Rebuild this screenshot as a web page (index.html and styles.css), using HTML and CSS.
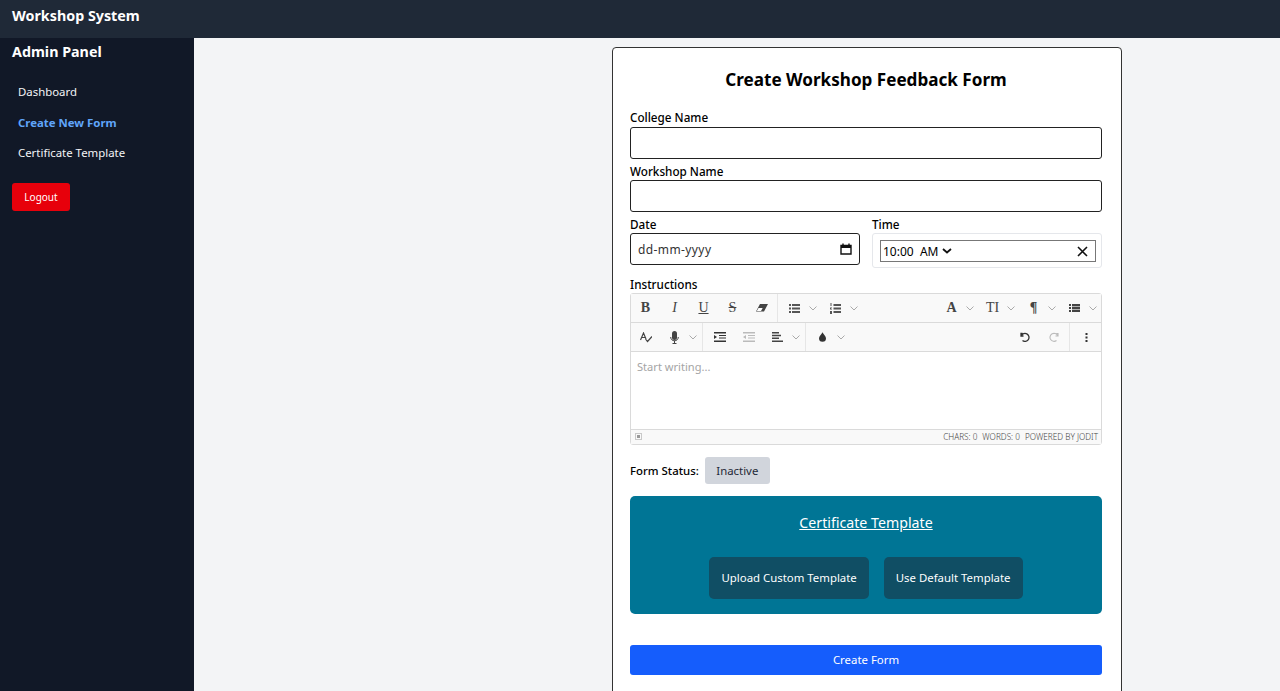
FILE: index.html
```html
<!DOCTYPE html>
<html lang="en">
<head>
  <meta charset="UTF-8">
  <title>Create Workshop Feedback Form</title>
  <link rel="stylesheet" href="styles.css">
</head>
<body>
  <header class="topbar">Workshop System</header>
  <div class="layout">
    <aside class="sidebar">
      <h2>Admin Panel</h2>
      <nav class="side-nav">
        <a href="#">Dashboard</a>
        <a href="#" class="active">Create New Form</a>
        <a href="#">Certificate Template</a>
      </nav>
      <button class="logout" type="button">Logout</button>
    </aside>
    <main class="main">
      <form class="card" autocomplete="off">
        <h1>Create Workshop Feedback Form</h1>

        <label class="label">College Name</label>
        <input class="input" type="text">
        <label class="label">Workshop Name</label>
        <input class="input" type="text">

        <div class="date-row">
          <div class="date-col">
            <label class="label">Date</label>
            <div class="input date-box">
              <span>dd-mm-yyyy</span>
              <svg width="12" height="12" viewBox="0 0 12 12"><path d="M1 2.5h10v8.500H1z" fill="none" stroke="#111" stroke-width="1.400"/><path d="M1 2h10v3H1z" fill="#111"/><path d="M3 .5v2M9 .5v2" stroke="#111" stroke-width="1.400"/></svg>
            </div>
          </div>
          <div class="date-col">
            <label class="label">Time</label>
            <div class="time-wrap">
              <div class="time-box">
                <span class="time-val">10:00&nbsp; AM</span>
                <svg class="time-chev" width="10" height="6" viewBox="0 0 10 6"><path d="M1 1l4 3.500L9 1" fill="none" stroke="#111" stroke-width="1.800"/></svg>
                <svg class="time-x" width="11" height="11" viewBox="0 0 11 11"><path d="M1 1l9 9M10 1l-9 9" stroke="#111" stroke-width="1.600"/></svg>
              </div>
            </div>
          </div>
        </div>

        <label class="label instr-label">Instructions</label>
        <div class="editor">
          <div class="tb-row">
            <span class="tb-btn glyph"><b>B</b></span>
            <span class="tb-btn glyph"><i>I</i></span>
            <span class="tb-btn glyph"><u>U</u></span>
            <span class="tb-btn glyph"><s>S</s></span>
            <span class="tb-btn"><svg width="12" height="8" viewBox="0 0 12 8"><path d="M4 0h8L8 7.500H0z" fill="#444"/><path d="M.8 7l1.700-3h4.200L5 7z" fill="#fff"/></svg></span>
            <span class="tb-sep"></span>
            <span class="tb-btn"><svg width="11" height="9" viewBox="0 0 11 9"><path d="M0 0h2v2H0zM0 3.500h2v2H0zM0 7h2v2H0zM3 0h8v2H3zM3 3.500h8v2H3zM3 7h8v2H3z" fill="#555"/></svg></span>
            <span class="tb-arrow"><svg class="chev" viewBox="0 0 8 5"><path d="M.5.500L4 4 7.500.5"/></svg></span>
            <span class="tb-btn"><svg width="11" height="11" viewBox="0 0 11 11"><path d="M.5 0h1v3h-1zM0 4.500h2v.6L.8 6H2v.6H0zM0 8h2v3H0zM3.500 1h7.500v2H3.500zM3.500 4.500h7.500v2H3.500zM3.500 8h7.500v2H3.500z" fill="#555"/></svg></span>
            <span class="tb-arrow"><svg class="chev" viewBox="0 0 8 5"><path d="M.5.500L4 4 7.500.5"/></svg></span>
            <span class="tb-fill"></span>
            <span class="tb-btn glyph tb-a"><b>A</b></span>
            <span class="tb-arrow"><svg class="chev" viewBox="0 0 8 5"><path d="M.5.500L4 4 7.500.5"/></svg></span>
            <span class="tb-btn glyph tb-t">TI</span>
            <span class="tb-arrow"><svg class="chev" viewBox="0 0 8 5"><path d="M.5.500L4 4 7.500.5"/></svg></span>
            <span class="tb-btn glyph tb-p">¶</span>
            <span class="tb-arrow"><svg class="chev" viewBox="0 0 8 5"><path d="M.5.500L4 4 7.500.5"/></svg></span>
            <span class="tb-btn"><svg width="11" height="8" viewBox="0 0 11 8"><path d="M0 0h2v2H0zM0 3h2v2H0zM0 6h2v2H0zM3 0h8v8H3z" fill="#444"/><path d="M3 2.500h8M3 5.500h8" stroke="#fff" stroke-width=".6"/></svg></span>
            <span class="tb-arrow"><svg class="chev" viewBox="0 0 8 5"><path d="M.5.500L4 4 7.500.5"/></svg></span>
          </div>
          <div class="tb-row">
            <span class="tb-btn"><svg width="12" height="11" viewBox="0 0 12 11"><path d="M.5 8L3.500 1 6 7M1.500 5.500h3.500M5.500 7l2 2.500L12 4.500" fill="none" stroke="#444" stroke-width="1.200"/></svg></span>
            <span class="tb-btn"><svg width="9" height="13" viewBox="0 0 9 13"><rect x="2" y="0" width="5" height="9" rx="2.500" fill="#444"/><path d="M.7 6c0 5 7.600 5 7.600 0M4.500 9.500V13M2.500 12.500h4" fill="none" stroke="#444"/></svg></span>
            <span class="tb-arrow"><svg class="chev" viewBox="0 0 8 5"><path d="M.5.500L4 4 7.500.5"/></svg></span>
            <span class="tb-sep"></span>
            <span class="tb-btn"><svg width="12" height="10" viewBox="0 0 12 10"><path d="M0 0h12v1.500H0zM5 3h7v1H5zM5 5.500h7v1H5zM0 8.500h12V10H0zM0 3l3 2-3 2z" fill="#333"/></svg></span>
            <span class="tb-btn"><svg width="12" height="10" viewBox="0 0 12 10"><path d="M0 0h12v1.500H0zM5 3h7v1H5zM5 5.500h7v1H5zM0 8.500h12V10H0zM3 3L0 5l3 2z" fill="#bbb"/></svg></span>
            <span class="tb-btn"><svg width="11" height="10" viewBox="0 0 11 10"><path d="M0 0h7v1.500H0zM0 2.800h9v1.500H0zM0 5.600h7v1.500H0zM0 8.400h11V10H0z" fill="#444"/></svg></span>
            <span class="tb-arrow"><svg class="chev" viewBox="0 0 8 5"><path d="M.5.500L4 4 7.500.5"/></svg></span>
            <span class="tb-sep"></span>
            <span class="tb-btn"><svg width="7" height="10" viewBox="0 0 8 11"><path d="M4 0c1 2.500 4 4.500 4 7a4 4 0 0 1-8 0c0-2.500 3-4.500 4-7z" fill="#333"/></svg></span>
            <span class="tb-arrow"><svg class="chev" viewBox="0 0 8 5"><path d="M.5.500L4 4 7.500.5"/></svg></span>
            <span class="tb-fill"></span>
            <span class="tb-btn"><svg width="10" height="10" viewBox="0 0 10 10"><path d="M2.500 1.500H1V4h2.500M1.300 3.800A4 4 0 1 1 2.500 8.500" fill="none" stroke="#333" stroke-width="1.300"/></svg></span>
            <span class="tb-btn"><svg width="10" height="10" viewBox="0 0 10 10"><path d="M7.500 1.500H9V4H6.500M8.700 3.800A4 4 0 1 0 7.500 8.500" fill="none" stroke="#bbb" stroke-width="1.100"/></svg></span>
            <span class="tb-sep"></span>
            <span class="tb-btn"><svg width="3" height="9" viewBox="0 0 3 9"><path d="M.5 0h2v2h-2zM.5 3.500h2v2h-2zM.5 7h2v2h-2z" fill="#333"/></svg></span>
          </div>
          <div class="editor-body">Start writing...</div>
          <div class="editor-foot">
            <svg width="7" height="7" viewBox="0 0 7 7"><rect x=".5" y=".5" width="6" height="6" fill="none" stroke="#999" stroke-dasharray="1 1"/><rect x="2" y="2" width="3" height="3" fill="#999"/></svg>
            <span class="foot-info">
              <span>CHARS: 0</span>
              <span>WORDS: 0</span>
              <span>POWERED BY JODIT</span>
            </span>
          </div>
        </div>

        <div class="status-row">
          <span class="status-label">Form Status:</span>
          <button class="status-btn" type="button">Inactive</button>
        </div>

        <section class="cert">
          <a href="#" class="cert-title">Certificate Template</a>
          <div class="cert-actions">
            <button type="button">Upload Custom Template</button>
            <button type="button">Use Default Template</button>
          </div>
        </section>

        <button class="submit" type="submit">Create Form</button>
      </form>
    </main>
  </div>
</body>
</html>
```

FILE: styles.css
```css
* {
  box-sizing: border-box;
}
html, body {
  height: 100%;
}
body {
  margin: 0;
  overflow: hidden;
  display: flex;
  flex-direction: column;
  background: #f3f4f6;
  color: #000;
  font-family: 'Noto Sans', 'Open Sans', sans-serif;
  font-size: 11.4px;
}
.topbar {
  flex: none;
  height: 38px;
  padding: 6px 12px 0;
  background: #1f2937;
  color: #fff;
  font-size: 14.3px;
  font-weight: 700;
}
.layout {
  flex: 1;
  display: flex;
  min-height: 0;
}
.sidebar {
  flex: none;
  width: 194px;
  padding: 4px 12px;
  background: #111827;
  color: #fff;
}
.sidebar h2 {
  margin: 0 0 16px;
  font-size: 14.3px;
  line-height: 20px;
}
.side-nav a {
  display: block;
  height: 30.5px;
  padding: 6px 6px 0;
  color: #f3f4f6;
  text-decoration: none;
}
.side-nav a.active {
  color: #60a5fa;
  font-weight: 700;
}
.logout {
  display: block;
  width: 58px;
  height: 28px;
  margin-top: 13px;
  padding: 0;
  border: none;
  border-radius: 3px;
  background: #e7000b;
  color: #fff;
  font: inherit;
  font-size: 10px;
}
.main {
  flex: 1;
  min-width: 0;
  display: flex;
  justify-content: center;
  padding: 9px 0 0 260px;
  overflow: hidden;
}
.card {
  flex: none;
  width: 510px;
  height: 700px;
  padding: 18px 19px 18px 17px;
  background: #fff;
  border: 1px solid #333;
  border-radius: 4px;
}
.card h1 {
  margin: 1px 0 16px;
  font-size: 17.1px;
  line-height: 26px;
  font-weight: 700;
  text-align: center;
}
.label {
  display: block;
  height: 18px;
  font-size: 11.7px;
  font-weight: 500;
  line-height: 19px;
}
.card h1 + .label {
  line-height: 17px;
}
.input {
  display: block;
  width: 100%;
  height: 32px;
  margin-bottom: 3px;
  padding: 0 7px;
  background: #fff;
  border: 1px solid #222;
  border-radius: 3px;
  font: inherit;
}
.date-row {
  display: flex;
  gap: 12px;
}
.date-col {
  flex: 1;
}
.date-box {
  display: flex;
  align-items: center;
  justify-content: space-between;
  margin-bottom: 0;
  color: #333;
  font-size: 12px;
  letter-spacing: .4px;
}
.time-wrap {
  height: 35px;
  padding: 6px 5px 0 7px;
  border: 1px solid #e5e7eb;
  border-radius: 3px;
}
.time-box {
  display: flex;
  align-items: center;
  height: 22px;
  padding: 0 7px 0 2px;
  border: 1px solid #777;
  font-size: 12px;
}
.time-val {
  margin-right: 4px;
}
.time-x {
  margin-left: auto;
}
.instr-label {
  margin-top: 7px;
}
.editor {
  height: 152px;
  border: 1px solid #dadada;
  border-radius: 3px;
  background: #fff;
}
.tb-row {
  display: flex;
  align-items: center;
  height: 29px;
  background: #f9f9f9;
  border-bottom: 1px solid #dadada;
}
.tb-btn {
  flex: none;
  display: flex;
  align-items: center;
  justify-content: center;
  width: 29px;
  height: 28px;
  color: #444;
}
.glyph {
  font-family: 'Liberation Serif', serif;
  font-size: 14px;
}
.tb-a {
  font-size: 14px;
}
.tb-p {
  font-weight: 700;
}
.tb-arrow {
  flex: none;
  display: flex;
  align-items: center;
  width: 12px;
  height: 28px;
}
.chev {
  width: 8px;
  height: 5px;
  fill: none;
  stroke: #aaa;
  stroke-width: 1;
}
.tb-sep {
  flex: none;
  width: 1px;
  height: 28px;
  margin: 0 2px 0 1px;
  background: #e6e6e6;
}
.tb-fill {
  flex: 1;
}
.editor-body {
  height: 77px;
  padding: 7px 6px;
  color: #a5a5a5;
  font-size: 11.1px;
}
.editor-foot {
  display: flex;
  align-items: center;
  justify-content: space-between;
  height: 15px;
  padding: 0 3px 1px 4px;
  background: #f9f9f9;
  border-top: 1px solid #dadada;
  color: #444;
  font-size: 8.200px;
  font-weight: 300;
}
.foot-info {
  display: flex;
  gap: 5px;
}
.status-row {
  display: flex;
  align-items: center;
  gap: 6px;
  margin-top: 12px;
}
.status-label {
  font-weight: 500;
}
.status-btn {
  width: 65px;
  height: 27px;
  padding: 0;
  border: none;
  border-radius: 3px;
  background: #d1d5dc;
  color: #1f2937;
  font: inherit;
}
.cert {
  height: 118px;
  margin-top: 12px;
  padding: 16px 0 0;
  border-radius: 5px;
  background: #007595;
  color: #fff;
  text-align: center;
}
.cert-title {
  color: #fff;
  font-size: 14.2px;
  line-height: 22px;
}
.cert-actions {
  display: flex;
  justify-content: center;
  gap: 15px;
  margin-top: 23px;
}
.cert-actions button {
  height: 42px;
  padding: 0 12px 2px;
  border: none;
  border-radius: 5px;
  background: #104e64;
  color: #fff;
  font: inherit;
}
.submit {
  display: block;
  width: 100%;
  height: 30px;
  margin-top: 31px;
  padding: 0 0 2px;
  border: none;
  border-radius: 3px;
  background: #155dfc;
  color: #fff;
  font: inherit;
}
```
